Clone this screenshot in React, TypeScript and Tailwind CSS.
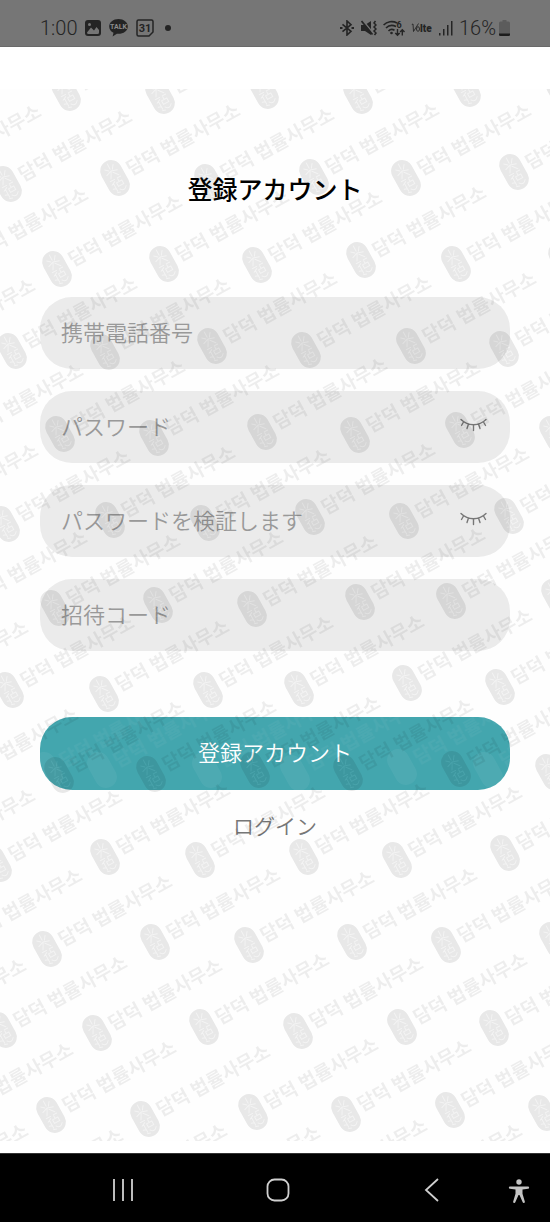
import { useState } from 'react';

type Mark = [x: number, y: number];

// Centres of the seals; the firm name runs up and to the right from each one.
const MARKS: Mark[] = [
  [66, 93], [160, 96], [264, 91], [358, 96], [466, 89], [561, 93],
  [-84, 179], [7, 184], [115, 178], [209, 182], [314, 177], [406, 178], [514, 172],
  [-37, 262], [57, 269], [164, 264], [257, 265], [361, 260], [456, 264], [563, 260],
  [-90, 353], [12, 351], [105, 352], [212, 346], [306, 350], [411, 346], [504, 349],
  [-42, 438], [60, 434], [154, 438], [262, 432], [355, 435], [460, 430], [554, 434],
  [-87, 518], [5, 524], [110, 520], [205, 523], [310, 517], [404, 521], [509, 516],
  [-38, 605], [55, 608], [158, 605], [252, 609], [360, 602], [451, 601], [556, 597],
  [-97, 695], [9, 690], [104, 694], [208, 690], [299, 689], [407, 683], [500, 687],
  [-47, 782], [59, 775], [151, 774], [255, 770], [348, 773], [456, 769], [550, 772],
  [-90, 863], [-3, 864], [105, 857], [200, 860], [304, 857], [397, 860], [505, 853],
  [-43, 943], [47, 949], [155, 942], [249, 945], [352, 942], [446, 945], [554, 940],
  [-99, 1033], [2, 1030], [97, 1033], [204, 1027], [298, 1031], [402, 1027], [494, 1028],
  [-52, 1117], [51, 1115], [145, 1119], [253, 1112], [346, 1114], [450, 1110], [543, 1113],
  [-97, 1198], [-2, 1203], [102, 1198], [195, 1200], [302, 1193], [397, 1198],
];

// Pale second print inside the button
const GHOSTS: Mark[] = [[8, 53], [62, 53], [167, 53], [255, 56], [362, 50], [448, 53]];

const Seal = ({ x, y }: { x: number; y: number }) => (
  <g transform={`translate(${x} ${y}) rotate(-29)`}>
    <rect x="-11" y="-19" width="22" height="38" rx="11" />
    <g fill="none" stroke="#fff" strokeWidth="1" strokeLinecap="round" opacity="0.5">
      <path d="M0-16v6M-5-12l3 3M5-13l-3 4M-6-6l6-2 6 2M0-8l-4 7M1-6l4 5M-6 1h5M2 1h4" />
      <path d="M-6 5l4-2M-4 4v9M-1 5h6v4h-6zM-7 9l3 1M-1 12c2 3 5 3 7 0M-5 14l3 1M2 2v3" />
    </g>
    <text x="15" y="6" fontSize="19" fontWeight="700" opacity="0.75">담덕 법률사무소</text>
  </g>
);

const Watermark = () => (
  <svg
    aria-hidden="true"
    className="pointer-events-none absolute inset-0 h-full w-full overflow-hidden font-['Noto_Sans_CJK_KR',sans-serif]"
  >
    <g transform="translate(0 -89)" fill="#000" opacity="0.09">
      {MARKS.map(([x, y]) => <Seal key={`${x},${y}`} x={x} y={y} />)}
    </g>
  </svg>
);

const StatusBar = () => (
  <header className="flex h-[47px] items-center justify-between border-b border-[#6a6a6a] bg-[#767676] pt-[10px] pr-10 pl-10 font-[Roboto,sans-serif] text-[20px] font-light text-[#242424]">
    <div className="flex items-center gap-2">
      <span>1:00</span>
      <svg className="h-4 w-4" viewBox="0 0 16 16">
        <rect width="16" height="16" rx="3" fill="#242424" />
        <path d="M2 12.500l4-5 3 3 2.500-3.500L14 10v2.500a1.500 1.500 0 0 1-1.500 1.500h-9A1.500 1.500 0 0 1 2 12.500z" fill="#767676" />
        <circle cx="4.500" cy="4.500" r="1.500" fill="#767676" />
      </svg>
      <svg className="h-[18px] w-[19px]" viewBox="0 0 19 18">
        <path d="M9.500 0C4.300 0 .2 3.300.2 7.400c0 2.700 1.700 5 4.300 6.300L3.600 17.500l4.300-2.800c5.800.7 10.900-2.600 10.900-7.300C18.800 3.300 14.700 0 9.500 0z" fill="#242424" />
        <text x="9.500" y="10" textAnchor="middle" fontSize="7" fontWeight="700" fill="#8c8c8c">TALK</text>
      </svg>
      <svg className="h-[18px] w-[18px]" viewBox="0 0 18 18">
        <path d="M2.500 1h13A1.500 1.500 0 0 1 17 2.500v10.500l-4 4H2.500A1.500 1.500 0 0 1 1 15.500v-13A1.500 1.500 0 0 1 2.500 1z" fill="none" stroke="#242424" strokeWidth="1.500" />
        <text x="9" y="13" textAnchor="middle" fontSize="11" fontWeight="700" fill="#242424">31</text>
      </svg>
      <svg className="h-[18px] w-[10px]" viewBox="0 0 10 18">
        <circle cx="6" cy="9" r="3" fill="#242424" />
      </svg>
    </div>

    <div className="flex items-center gap-[6px]">
      <svg className="h-4 w-4" viewBox="0 0 16 16" fill="none" stroke="#242424" strokeWidth="1.600">
        <path d="M3.500 4.300l8.500 7-4 3.700V1l4 3.700-8.500 7" />
        <path d="M1 8h2.500M12.500 8H15" strokeWidth="2.200" />
      </svg>
      <svg className="h-4 w-4" viewBox="0 0 16 16" fill="#242424">
        <path d="M0 5h4L10 1v14l-6-4H0z" />
        <path d="M1.500 0l11 13.500" stroke="#767676" strokeWidth="1.500" />
        <path d="M.5 1l11 13.500" stroke="#242424" strokeWidth="1.700" />
        <path d="M14.500 1l-1.500 2 2 2-2 2 2 2-2 2 2 2-1.500 2" fill="none" stroke="#242424" strokeWidth="1.500" />
      </svg>
      <svg className="h-[17px] w-[22px]" viewBox="0 0 22 17" fill="none" stroke="#242424" strokeWidth="1.600">
        <path d="M.6 5C4 1.600 9.500.6 14 3M3 8c2.600-2.600 6.500-3.200 10-1.500M5.500 11c1.600-1.700 4-2 6-.8" />
        <circle cx="8.500" cy="13" r="1.300" fill="#242424" stroke="none" />
        <path d="M14.500 9v6M12.300 13l2.200 2.300 2.200-2.300M19.300 15.500V10M17.100 12l2.200-2.300 2.200 2.300" strokeWidth="1.400" />
        <text x="13.500" y="7.500" fontSize="9" fontWeight="700" fill="#242424" stroke="none">6</text>
      </svg>
      <svg className="h-4 w-[22px]" viewBox="0 0 22 16" fill="#242424">
        <path d="M.8 4.500L2 4l.5 7.500L7.500 3.500" fill="none" stroke="#242424" strokeWidth="0.900" />
        <ellipse cx="7" cy="9" rx="1.500" ry="2.300" fill="none" stroke="#242424" strokeWidth="0.900" />
        <text x="9" y="12" fontSize="10" fontWeight="900">lte</text>
      </svg>
      <svg className="h-4 w-[14px]" viewBox="0 0 14 16" fill="#242424">
        <path d="M0 13h1.500v2.500H0zM4 9h1.500v6.500H4zM8 5h1.500v10.500H8zM12 1h1.500v14.500H12z" />
      </svg>
      <span className="flex items-center gap-[3px]">
        16%
        <svg className="h-4 w-[11px]" viewBox="0 0 11 16">
          <path d="M3.500 0h4v1.500H9.500A1.500 1.500 0 0 1 11 3v11.500A1.500 1.500 0 0 1 9.500 16h-8A1.500 1.500 0 0 1 0 14.500V3A1.500 1.500 0 0 1 1.500 1.500h2z" fill="#5c5c5c" />
          <path d="M0 13.500h11v1A1.500 1.500 0 0 1 9.500 16h-8A1.500 1.500 0 0 1 0 14.500z" fill="#1c1c1c" />
        </svg>
      </span>
    </div>
  </header>
);

const ClosedEye = () => (
  <svg className="h-[14px] w-7" viewBox="0 0 28 14" fill="none" stroke="#777" strokeWidth="1.400" strokeLinecap="round">
    <path d="M1 1.500c7 7 18 7 25 0M3.500 4L1.500 7.500M8.500 6L7 10.500M13.500 7v5.500M18.500 6l1.500 4.500M23.500 4l2 3.500" />
  </svg>
);

type FieldProps = {
  id: string;
  label: string;
  type?: string;
  secret?: boolean;
};

const Field = ({ id, label, type = 'text', secret = false }: FieldProps) => {
  const [visible, setVisible] = useState(false);

  return (
    <div className="flex h-[72px] items-center rounded-[32px] bg-[#ebebeb] pr-[22px] pb-1 pl-[21px]">
      <label htmlFor={id} className="sr-only">{label}</label>
      <input
        id={id}
        type={secret && !visible ? 'password' : type}
        placeholder={label}
        className="min-w-0 flex-1 bg-transparent text-[22px] font-[350] text-[#555] outline-none placeholder:text-[#999]"
      />
      {secret && (
        <button type="button" aria-label={`${label} 表示`} onClick={() => setVisible(v => !v)}>
          <ClosedEye />
        </button>
      )}
    </div>
  );
};

const NavBar = () => (
  <nav className="flex h-[69px] items-center border-t border-[#333] bg-black pt-1 pr-[19px] pl-[111px] text-[#d0d0d0]">
    <div className="flex flex-1 justify-between">
      <button type="button" aria-label="履歴">
        <svg className="h-6 w-6" viewBox="0 0 24 24" stroke="currentColor" strokeWidth="1.800">
          <path d="M3 1v22M12 1v22M21 1v22" />
        </svg>
      </button>
      <button type="button" aria-label="ホーム">
        <svg className="h-6 w-6" viewBox="0 0 24 24" fill="none" stroke="currentColor" strokeWidth="1.800">
          <rect x="1.500" y="1.500" width="21" height="21" rx="7" />
        </svg>
      </button>
      <button type="button" aria-label="戻る">
        <svg className="h-6 w-6" viewBox="0 0 24 24" fill="none" stroke="currentColor" strokeWidth="1.800">
          <path d="M18 1L6 12l12 11" />
        </svg>
      </button>
    </div>
    <button type="button" aria-label="ユーザー補助" className="ml-[63px] pt-[2px]">
      <svg className="h-6 w-6" viewBox="0 0 24 24" fill="#c4c4c4">
        <circle cx="12" cy="3" r="2.700" />
        <path d="M3 7.500h18a1 1 0 0 1 0 2.300l-5.500.7v4.200l2.300 7.800a1.100 1.100 0 0 1-2.100.7L12.500 16h-1l-3.200 7.200a1.100 1.100 0 0 1-2.100-.7l2.300-7.800v-4.200L3 9.800a1 1 0 0 1 0-2.300z" />
      </svg>
    </button>
  </nav>
);

export default function App() {
  return (
    <div className="flex min-h-screen flex-col bg-white font-['Noto_Sans_CJK_JP',sans-serif]">
      <StatusBar />

      <main className="relative mt-[42px] mb-3 flex-1 overflow-hidden bg-[#fefefe] px-10">
        <h1 className="pt-[79px] text-center text-[25px] leading-10 font-medium text-black">登録アカウント</h1>

        <form className="mt-[89px] flex flex-col" onSubmit={e => e.preventDefault()}>
          <div className="flex flex-col gap-[22px]">
            <Field id="phone" label="携帯電話番号" type="tel" />
            <Field id="password" label="パスワード" secret />
            <Field id="password-confirm" label="パスワードを検証します" secret />
            <Field id="invite" label="招待コード" />
          </div>

          <button type="submit" className="relative mt-[66px] h-[73px] overflow-hidden rounded-[32px] bg-[#44a6ae] pb-1 text-[22px] font-[350] text-white">
            <svg aria-hidden="true" className="absolute inset-0 h-full w-full font-['Noto_Sans_CJK_KR',sans-serif]">
              <g fill="#fff" opacity="0.05">
                {GHOSTS.map(([x, y]) => <Seal key={x} x={x} y={y} />)}
              </g>
            </svg>
            <span className="relative">登録アカウント</span>
          </button>
        </form>

        <p className="mt-[19px] text-center">
          <a href="#login" className="text-[21px] leading-8 font-[350] text-[#777]">ログイン</a>
        </p>

        <Watermark />
      </main>

      <NavBar />
    </div>
  );
}
